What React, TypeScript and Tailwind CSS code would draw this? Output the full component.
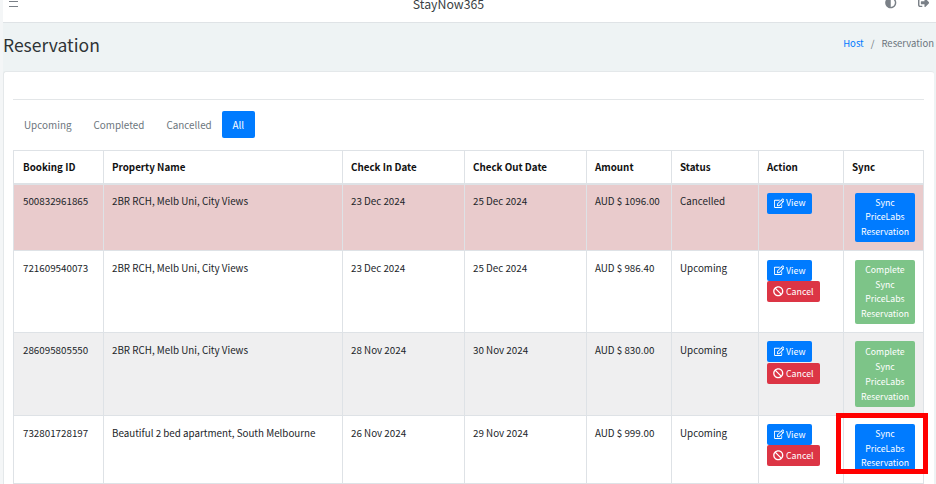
import { FaAdjust, FaBan, FaRegEdit, FaSignOutAlt } from 'react-icons/fa';

const rows = [
  { id: '500832961865', name: '2BR RCH, Melb Uni, City Views', checkIn: '23 Dec 2024', checkOut: '25 Dec 2024', amount: 'AUD $ 1096.00', status: 'Cancelled', bg: 'bg-[#e9cbcc]', h: 'h-[67px]', textPt: 'pt-[9px]', btnPt: 'pt-[8px]', stack: 'gap-0', lead: 'leading-[14.5px]', cancel: false, complete: false },
  { id: '721609540073', name: '2BR RCH, Melb Uni, City Views', checkIn: '23 Dec 2024', checkOut: '25 Dec 2024', amount: 'AUD $ 986.40', status: 'Upcoming', bg: 'bg-white', h: 'h-[82px]', textPt: 'pt-[10px]', btnPt: 'pt-[9px]', stack: 'gap-0', lead: 'leading-[14.5px]', cancel: true, complete: true },
  { id: '286095805550', name: '2BR RCH, Melb Uni, City Views', checkIn: '28 Nov 2024', checkOut: '30 Nov 2024', amount: 'AUD $ 830.00', status: 'Upcoming', bg: 'bg-[#efeff0]', h: 'h-[83px]', textPt: 'pt-[10px]', btnPt: 'pt-[8px]', stack: 'gap-px', lead: 'leading-[15px]', cancel: true, complete: true },
  { id: '732801728197', name: 'Beautiful 2 bed apartment, South Melbourne', checkIn: '26 Nov 2024', checkOut: '29 Nov 2024', amount: 'AUD $ 999.00', status: 'Upcoming', bg: 'bg-white', h: 'h-[68px]', textPt: 'pt-[10px]', btnPt: 'pt-[8px]', stack: 'gap-0', lead: 'leading-[14.5px]', cancel: true, complete: false },
];

const heads = ['Booking ID', 'Property Name', 'Check In Date', 'Check Out Date', 'Amount', 'Status', 'Action', 'Sync'];
const widths = ['w-[90px]', 'w-[239px]', 'w-[122px]', 'w-[122px]', 'w-[85px]', 'w-[87px]', 'w-[85px]', 'w-[80px]'];

export default function App() {
  return (
    <div className="relative h-[484px] w-[936px] overflow-hidden bg-[#f4f6f7] pl-[3px] text-[10px] leading-[14px] text-[#212529] [font-family:'Noto_Sans_CJK_SC','Noto_Sans',sans-serif]">
      {/* top bar, cut off by the screenshot */}
      <div className="flex h-[23px] items-start justify-between border-b border-[#dfe3e6] bg-white pl-[6px] pr-[7px]">
        <svg width="9" height="7" viewBox="0 0 9 7" className="mt-px text-[#7a8087]">
          <path d="M0 0.5h9M0 5.5h9" stroke="currentColor" strokeWidth="1" />
        </svg>
        <span className="-mt-[4px] ml-[-6px] text-[12.3px] leading-[16px] text-[#3a3f44]">StayNow365</span>
        <div className="flex items-start gap-[21px] text-[#7a8087]">
          <FaAdjust className="-mt-[3px] text-[11.5px]" />
          <FaSignOutAlt className="-mt-[3px] text-[11.5px]" />
        </div>
      </div>

      <div className="bg-[#eef3f4] pr-[2px]">
        <div className="flex h-[48px] items-start justify-between">
          <h1 className="pt-[10px] text-[17.5px] leading-[24px] text-[#2f3336]">Reservation</h1>
          <div className="flex gap-[7px] pt-[13px] text-[9.5px] text-[#6c757d]">
            <span className="text-[#007bff]">Host</span>
            <span>/</span>
            <span>Reservation</span>
          </div>
        </div>

        <div className="h-[414px] rounded-t-[3px] border-l border-t border-[#e4e8ea] bg-white pl-[9px] pr-[10px]">
          <div className="h-[28px] border-b border-[#e3e6e8]" />
          <div className="flex h-[50px] items-center pb-[2px] text-[9.9px]">
            <a className="px-[11px] pt-[2px] text-[#6c757d]">Upcoming</a>
            <a className="px-[11px] pt-[2px] text-[#6c757d]">Completed</a>
            <a className="px-[11px] pt-[2px] text-[#6c757d]">Cancelled</a>
            <a className="-ml-px flex h-[27px] w-[33px] items-center justify-center rounded-[2px] bg-[#007bff] pt-[1px] text-white">All</a>
          </div>

          <table className="w-[910px] table-fixed border-collapse">
            <thead>
              <tr className="h-[33px]">
                {heads.map((head, i) => (
                  <th key={head} className={`${widths[i]} border border-[#dee2e6] border-b-2 ${i === 0 ? 'pl-[9px]' : 'pl-[8px]'} text-left align-middle text-[9.8px] font-bold text-[#111]`}>
                    {head}
                  </th>
                ))}
              </tr>
            </thead>
            <tbody>
              {rows.map((row) => (
                <tr key={row.id} className={`${row.bg} ${row.h}`}>
                  <td className={`border border-[#dee2e6] pl-[9px] ${row.textPt} align-top text-[9.8px]`}>{row.id}</td>
                  <td className={`border border-[#dee2e6] pl-[8px] ${row.textPt} align-top text-[9.8px]`}>{row.name}</td>
                  <td className={`border border-[#dee2e6] pl-[8px] ${row.textPt} align-top text-[9.8px]`}>{row.checkIn}</td>
                  <td className={`border border-[#dee2e6] pl-[8px] ${row.textPt} align-top text-[9.8px]`}>{row.checkOut}</td>
                  <td className={`border border-[#dee2e6] pl-[8px] ${row.textPt} align-top text-[9.8px]`}>{row.amount}</td>
                  <td className={`border border-[#dee2e6] pl-[8px] ${row.textPt} align-top text-[9.8px]`}>{row.status}</td>
                  <td className={`border border-[#dee2e6] pl-[8px] ${row.btnPt} align-top`}>
                    <div className={`flex flex-col items-start ${row.stack}`}>
                      <button className="flex h-[21px] w-[45px] items-center justify-center gap-[2px] rounded-[2px] bg-[#007bff] text-[8.8px] text-white">
                        <FaRegEdit className="text-[10.5px]" />
                        View
                      </button>
                      {row.cancel && (
                        <button className="flex h-[21px] w-[53px] items-center justify-center gap-[2px] rounded-[2px] bg-[#dc3545] text-[8.8px] text-white">
                          <FaBan className="text-[10.5px]" />
                          Cancel
                        </button>
                      )}
                    </div>
                  </td>
                  <td className={`border border-[#dee2e6] ${row.btnPt} align-top`}>
                    <button className={`ml-[11px] block w-[60px] rounded-[2px] py-[3px] text-center text-[8.7px] ${row.lead} text-white ${row.complete ? 'bg-[#7dc488]' : 'bg-[#007bff]'}`}>
                      {row.complete && <div>Complete</div>}
                      <div>Sync</div>
                      <div>PriceLabs</div>
                      <div>Reservation</div>
                    </button>
                  </td>
                </tr>
              ))}
            </tbody>
          </table>
        </div>
      </div>

      {/* red annotation drawn over the screenshot */}
      <div className="absolute left-[836px] top-[413px] h-[61px] w-[92px] border-[5px] border-[#ff0000]" />
    </div>
  );
}
